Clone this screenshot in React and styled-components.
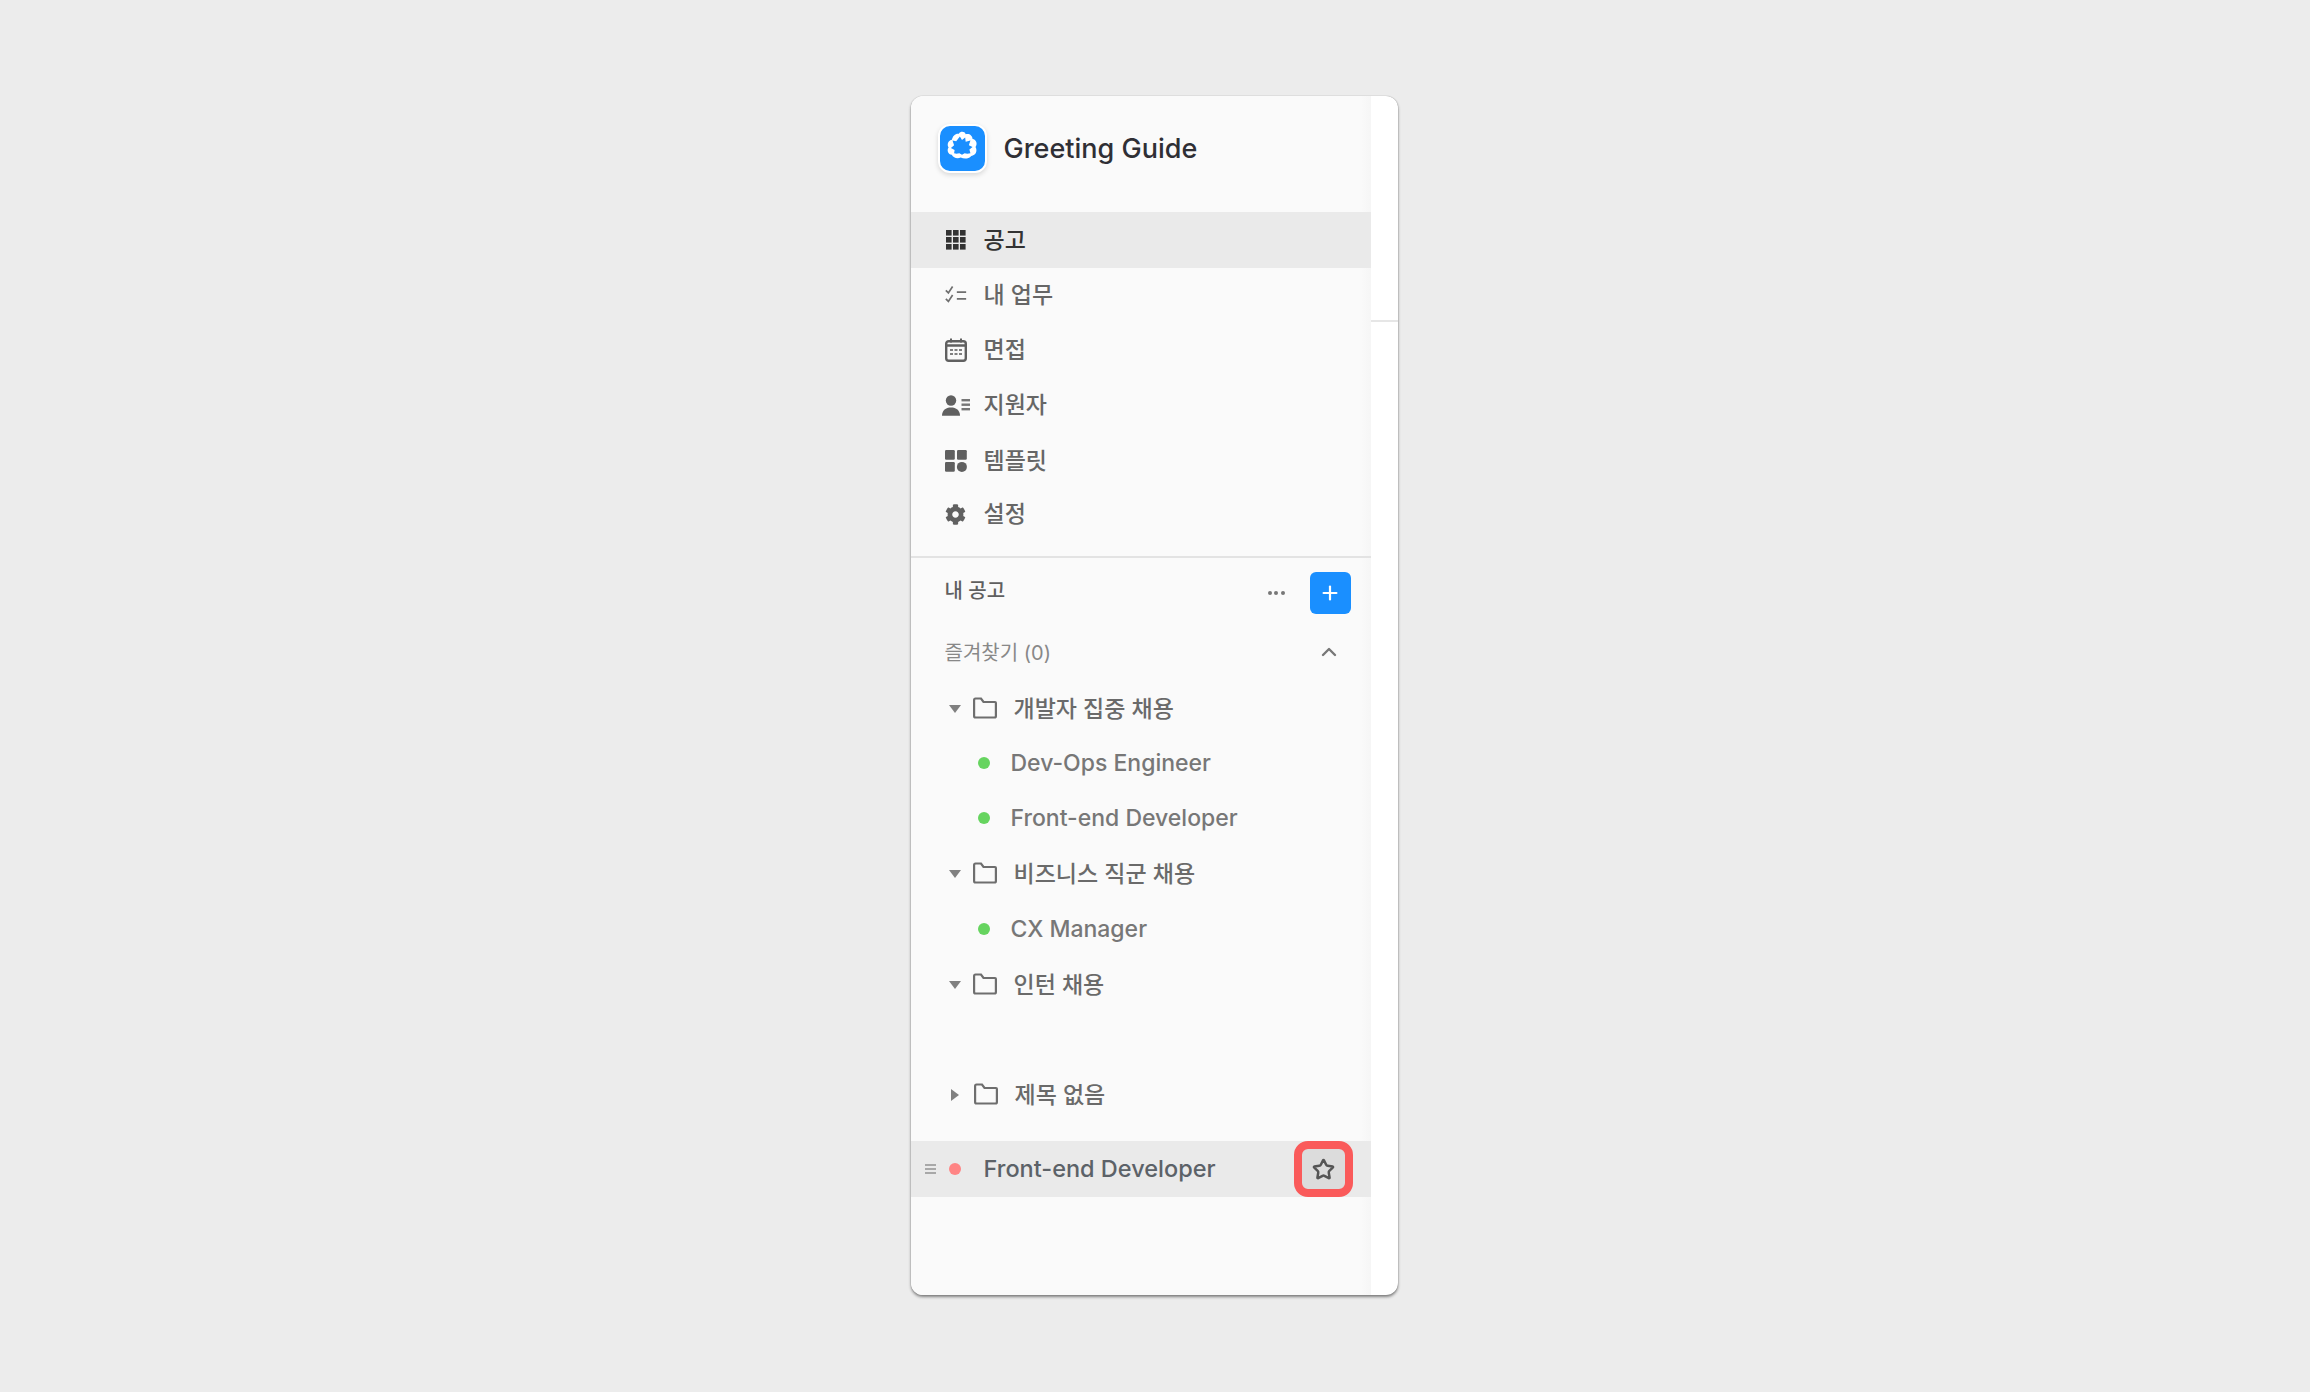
import React from "react";
import styled, { createGlobalStyle } from "styled-components";
import { ChevronUp, Plus, Star } from "lucide-react";
import { FaCog } from "react-icons/fa";

const Global = createGlobalStyle`
  html, body { margin: 0; padding: 0; height: 100%; background: #ececec; }
  #root { height: 100%; }
  * { box-sizing: border-box; }
`;

const Page = styled.div`
  width: 2310px;
  height: 1392px;
  display: flex;
  align-items: center;
  justify-content: center;
  padding: 0 2px 2px 0;
  font-family: Inter, "Noto Sans CJK KR", sans-serif;
`;

const Card = styled.div`
  width: 487px;
  height: 1199px;
  display: flex;
  background: #fff;
  border-radius: 12px;
  overflow: hidden;
  box-shadow: 0 2px 3px rgba(0, 0, 0, 0.45), 0 0 1px rgba(0, 0, 0, 0.4);
`;

const Sidebar = styled.aside`
  width: 460px;
  display: flex;
  flex-direction: column;
  background: linear-gradient(to left, #f6f6f6 0, #fafafa 10px);
`;

const Strip = styled.div`
  flex: 1;
  height: 226px;
  border-bottom: 2px solid #e6e6e6;
`;

const Brand = styled.div`
  height: 116px;
  display: flex;
  align-items: flex-start;
  padding: 28px 0 0 27px;
  gap: 17px;
`;

const LogoBox = styled.div`
  width: 49px;
  height: 49px;
  border-radius: 12px;
  background: #1a8fff;
  border: 2px solid #fff;
  box-shadow: 0 2px 5px rgba(0, 0, 0, 0.14);
  display: flex;
  align-items: center;
  justify-content: center;
`;

const BrandName = styled.div`
  font-size: 27px;
  font-weight: 500;
  color: #2f2f35;
  line-height: 49px;
`;

const Nav = styled.nav`
  display: flex;
  flex-direction: column;
  padding-bottom: 16px;
  border-bottom: 2px solid #e3e3e3;
`;

const NavRow = styled.div`
  height: ${(p) => (p.$active ? "56px" : "55.2px")};
  display: flex;
  align-items: center;
  padding-left: 34px;
  gap: 17px;
  font-size: 23px;
  font-weight: 500;
  color: ${(p) => (p.$active ? "#333" : "#666")};
  background: ${(p) => (p.$active ? "#eaeaea" : "transparent")};
  & > span { position: relative; top: -2px; }
  &:last-child { height: 52px; }
`;

const IconSlot = styled.div`
  width: 22px;
  height: 22px;
  display: flex;
  align-items: center;
  justify-content: center;
  color: #606060;
  flex: none;
`;

const SectionHead = styled.div`
  height: 65px;
  display: flex;
  align-items: center;
  padding: 4px 20px 0 34px;
  font-size: 20px;
  font-weight: 500;
  color: #5f5f5f;
`;

const SectionTitle = styled.div`
  flex: 1;
  position: relative;
  top: -3px;
`;

const Dots = styled.div`
  display: flex;
  gap: 2.5px;
  margin-right: 25px;
`;

const Dot3 = styled.i`
  width: 4px;
  height: 4px;
  border-radius: 50%;
  background: #777;
`;

const AddButton = styled.div`
  width: 41px;
  height: 42px;
  border-radius: 6px;
  background: #1a8fff;
  color: #fff;
  display: flex;
  align-items: center;
  justify-content: center;
`;

const FavRow = styled.div`
  height: 56px;
  display: flex;
  align-items: center;
  padding: 0 21px 0 34px;
  font-size: 20px;
  color: #888;
  justify-content: space-between;
`;

const FavChevron = styled(ChevronUp)`
  margin-right: 9px;
  position: relative;
  top: 1px;
`;

const Tree = styled.div`
  display: flex;
  flex-direction: column;
  padding-top: 1px;
`;

const FolderRow = styled.div`
  height: 55.2px;
  display: flex;
  align-items: center;
  padding-left: 38px;
  font-size: 23px;
  font-weight: 500;
  color: #6a6a6a;
  & > span { position: relative; top: -1px; }
`;

const Caret = styled.div`
  width: 0;
  height: 0;
  margin-right: ${(p) => (p.$open ? "12px" : "15px")};
  margin-left: ${(p) => (p.$open ? "0" : "2px")};
  position: relative;
  top: 1px;
  border-style: solid;
  border-color: transparent;
  ${(p) =>
    p.$open
      ? "border-width: 8px 6px 0 6px; border-top-color: #808080;"
      : "border-width: 6px 0 6px 8px; border-left-color: #808080;"}
`;

const FolderWrap = styled.div`
  width: 24px;
  height: 22px;
  margin-right: 17px;
  color: #6a6a6a;
  display: flex;
`;

const JobRow = styled.div`
  height: 55.2px;
  display: flex;
  align-items: center;
  padding-left: 67px;
  gap: 21px;
  font-size: 23px;
  font-weight: 500;
  color: #777;
`;

const StatusDot = styled.i`
  width: 12px;
  height: 12px;
  border-radius: 50%;
  flex: none;
  background: ${(p) => p.$color};
`;

const Spacer = styled.div`
  height: ${(p) => p.$h}px;
`;

const SelectedRow = styled.div`
  height: 56px;
  display: flex;
  align-items: center;
  background: #eaeaea;
  padding: 0 18px 0 14px;
  font-size: 23.5px;
  font-weight: 500;
  color: #5c6268;
`;

const Handle = styled.div`
  width: 11px;
  display: flex;
  flex-direction: column;
  gap: 2px;
  margin-right: 13px;
  & > i { height: 2px; background: #a8a8a8; display: block; }
`;

const SelectedName = styled.div`
  flex: 1;
  margin-left: 23px;
  position: relative;
  top: -1px;
`;

const StarButton = styled.div`
  width: 59px;
  height: 56px;
  border: 8px solid #fa5a5a;
  border-radius: 14px;
  background: #dcdcdc;
  color: #555;
  display: flex;
  align-items: center;
  justify-content: center;
`;

const GridIcon = () => (
  <svg width="20" height="20" viewBox="0 0 20 20" fill="#333">
    {[0, 7, 14].flatMap((y) =>
      [0, 7, 14].map((x) => <rect key={`${x}-${y}`} x={x} y={y} width="5.6" height="5.6" />)
    )}
  </svg>
);
const CheckIcon = () => (
  <svg width="26" height="24" viewBox="0 0 26 24" fill="none" stroke="#6f6f6f" strokeWidth="2">
    <path d="M1 6.500l3 3 5-7.500M1 16.500l3 3 5-7.500M14 8.500h11M14 16.500h11" />
  </svg>
);
const CalIcon = () => (
  <svg width="22" height="24" viewBox="0 0 22 24" fill="none">
    <rect x="1.200" y="3.200" width="19.600" height="19.600" rx="2.500" stroke="#606060" strokeWidth="2.400" />
    <path d="M1 7.500h20" stroke="#606060" strokeWidth="2.500" />
    <path d="M6 0.500v4M16 0.500v4" stroke="#606060" strokeWidth="2" />
    <path d="M5 12h12M5 16h12" stroke="#808080" strokeWidth="2" strokeDasharray="3 1.500" />
  </svg>
);
const PersonIcon = () => (
  <svg width="28" height="21" viewBox="0 0 28 21" fill="#606060" style={{ flex: "none" }}>
    <circle cx="9" cy="5.500" r="5.200" />
    <path d="M0 20.800c0-5.800 3.800-8.400 9-8.400s9 2.600 9 8.400z" />
    <rect x="19.500" y="4" width="8.500" height="2.400" fill="#777" />
    <rect x="19.500" y="8.500" width="8.500" height="2.400" fill="#777" />
    <rect x="19.500" y="13" width="8.500" height="2.400" fill="#777" />
  </svg>
);
const TemplateIcon = () => (
  <svg width="22" height="22" viewBox="0 0 22 22" fill="#606060">
    <rect x="0" y="0" width="9.800" height="9.800" rx="1.200" />
    <rect x="12" y="0" width="9.800" height="9.800" rx="1.200" />
    <rect x="0" y="12" width="9.800" height="9.800" rx="1.200" />
    <circle cx="16.900" cy="16.900" r="5" />
  </svg>
);
const FolderIcon = () => (
  <svg width="24" height="22" viewBox="0 0 24 22" fill="none" stroke="#6e6e6e" strokeWidth="2.200">
    <path d="M1.100 19V3c0-1 .5-1.500 1.400-1.500H8L10.500 5H22c.6 0 .9.400.9 1v13c0 1-.5 1.500-1.400 1.500h-19c-.9 0-1.400-.5-1.400-1.500z" />
  </svg>
);
const LogoMark = () => (
  <svg width="38" height="38" viewBox="0 0 36 36">
    <path
      d="M15 4.500c1.500-2.500 5.500-2.500 6.500.5 3-1.200 6.500 1 6.500 4.500 3.500.5 5 4.500 2.800 7.500 2.200 3.500.2 8-4 8.500-2.500 3-7 3-10 1.500-3 1.500-7 .5-8.500-2.500-3.500-.5-5-4.500-3-7-2-3 0-7 3.200-7.300C9 6.500 12 4 15 4.500z"
      fill="#fff"
    />
    <path
      d="M16 7l2 3.500 3-2.500.5 4 4.500-1-1.500 4.500 3.500 1.500-3 2.500 1 3.500c-2 .5-4 .5-5.500 0l-2.500 1.500-2.500-1.500c-2 .5-3.500.5-5 0l.5-3-3.500-2 3-2.500-1.500-4.500 3.500.5z"
      fill="#1a8fff"
    />
  </svg>
);

const nav = [
  { label: "공고", icon: <GridIcon />, active: true },
  { label: "내 업무", icon: <CheckIcon /> },
  { label: "면접", icon: <CalIcon /> },
  { label: "지원자", icon: <PersonIcon /> },
  { label: "템플릿", icon: <TemplateIcon /> },
  { label: "설정", icon: <FaCog size={21} /> },
];

const Folder = ({ name, open = true }) => (
  <FolderRow>
    <Caret $open={open} />
    <FolderWrap>
      <FolderIcon />
    </FolderWrap>
    <span>{name}</span>
  </FolderRow>
);

const Job = ({ name }) => (
  <JobRow>
    <StatusDot $color="#66d45f" />
    {name}
  </JobRow>
);

export default function App() {
  return (
    <Page>
      <Global />
      <Card>
        <Sidebar>
          <Brand>
            <LogoBox>
              <LogoMark />
            </LogoBox>
            <BrandName>Greeting Guide</BrandName>
          </Brand>
          <Nav>
            {nav.map((n) => (
              <NavRow key={n.label} $active={n.active}>
                <IconSlot>{n.icon}</IconSlot>
                <span>{n.label}</span>
              </NavRow>
            ))}
          </Nav>
          <SectionHead>
            <SectionTitle>내 공고</SectionTitle>
            <Dots>
              <Dot3 />
              <Dot3 />
              <Dot3 />
            </Dots>
            <AddButton>
              <Plus size={22} strokeWidth={2.4} />
            </AddButton>
          </SectionHead>
          <FavRow>
            <span>즐겨찾기 (0)</span>
            <FavChevron size={24} color="#777" strokeWidth={2.4} />
          </FavRow>
          <Tree>
            <Folder name="개발자 집중 채용" />
            <Job name="Dev-Ops Engineer" />
            <Job name="Front-end Developer" />
            <Folder name="비즈니스 직군 채용" />
            <Job name="CX Manager" />
            <Folder name="인턴 채용" />
            <Spacer $h={55.2} />
            <Folder name="제목 없음" open={false} />
          </Tree>
          <Spacer $h={19.5} />
          <SelectedRow>
            <Handle>
              <i />
              <i />
              <i />
            </Handle>
            <StatusDot $color="#ff8585" />
            <SelectedName>Front-end Developer</SelectedName>
            <StarButton>
              <Star size={23} strokeWidth={2.6} />
            </StarButton>
          </SelectedRow>
        </Sidebar>
        <Strip />
      </Card>
    </Page>
  );
}
